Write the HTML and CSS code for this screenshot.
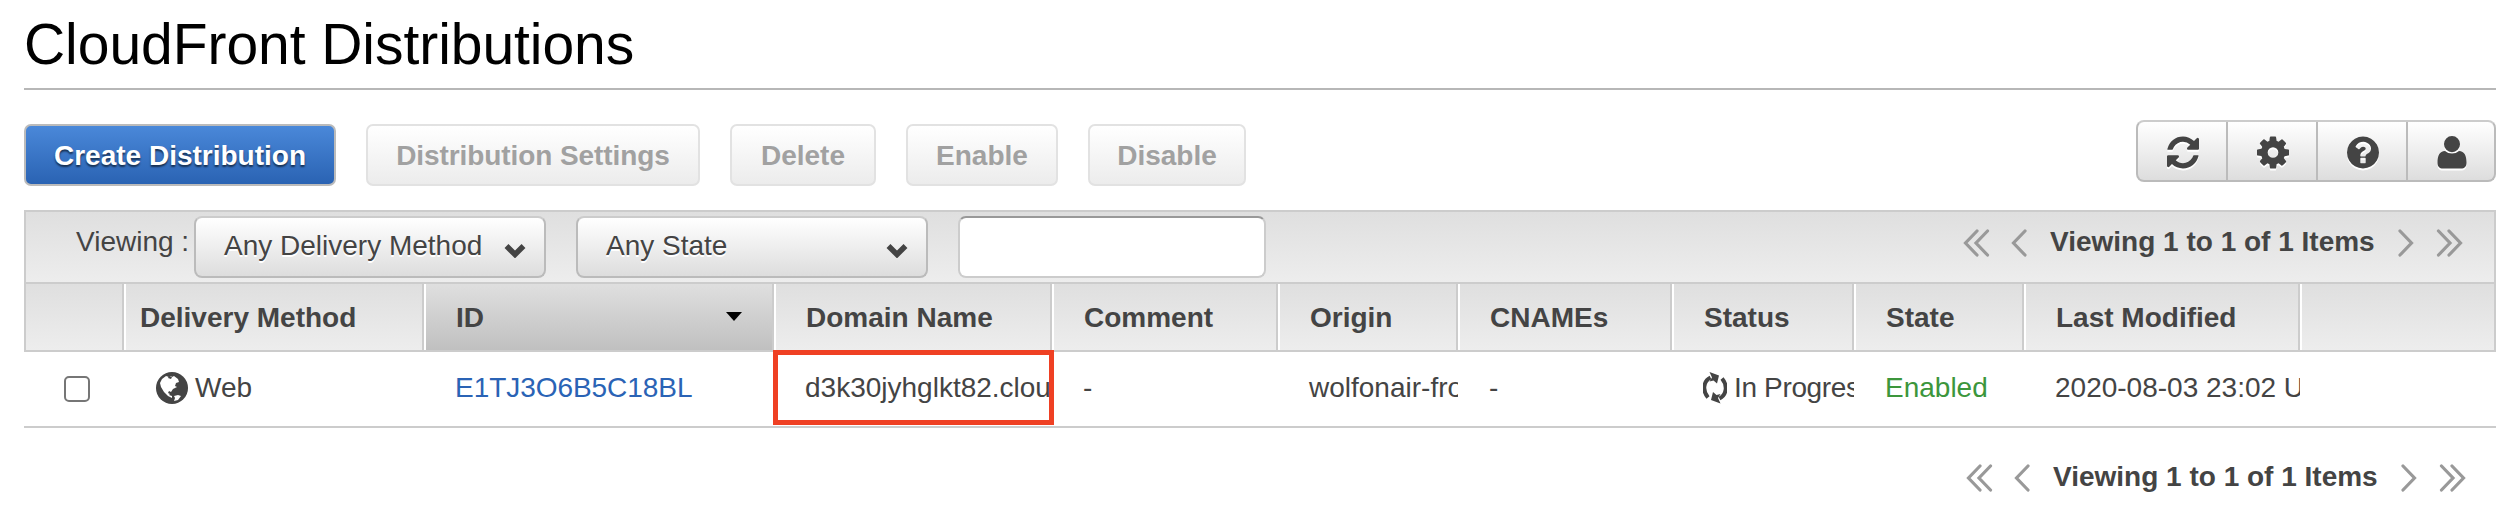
FILE: index.html
```html
<!DOCTYPE html>
<html lang="en">
<head>
<meta charset="utf-8">
<title>CloudFront Distributions</title>
<link rel="stylesheet" href="styles.css">
</head>
<body>
<svg class="defs" width="0" height="0">
  <symbol id="refresh" viewBox="0 0 1536 1536"><path d="M1511 928q0 5-1 7-64 268-268 434.500T764 1536q-146 0-282.500-55T238 1324l-129 129q-19 19-45 19t-45-19-19-45V960q0-26 19-45t45-19h448q26 0 45 19t19 45-19 45l-137 137q71 66 161 102t187 36q134 0 250-65t186-179q11-17 53-117 8-23 30-23h192q13 0 22.500 9.500t9.500 22.500zm25-800v448q0 26-19 45t-45 19h-448q-26 0-45-19t-19-45 19-45l138-138Q969 256 768 256q-134 0-250 65T332 500q-11 17-53 117-8 23-30 23H50q-13 0-22.500-9.500T18 608v-7q65-268 270-434.500T768 0q146 0 284 55.500T1297 212l130-129q19-19 45-19t45 19 19 45z"/></symbol>
  <symbol id="gear" viewBox="0 0 1536 1536"><path d="M1024 768q0-106-75-181t-181-75-181 75-75 181 75 181 181 75 181-75 75-181zm512-109v222q0 12-8 23t-20 13l-185 28q-19 54-39 91 35 50 107 138 10 12 10 25t-9 23q-27 37-99 108t-94 71q-12 0-26-9l-138-108q-44 23-91 38-16 136-29 186-7 28-36 28H657q-14 0-24.500-8.500T621 1506l-28-184q-49-16-90-37l-141 107q-10 9-25 9-14 0-25-11-126-114-165-168-7-10-7-23 0-12 8-23 15-21 51-66.500t54-70.500q-27-50-41-99L29 913q-13-2-21-12.500T0 877V655q0-12 8-23t19-13l186-28q14-46 39-92-40-57-107-138-10-12-10-24 0-10 9-23 26-36 98.500-107.500T337 135q13 0 26 10l138 107q44-23 91-38 16-136 29-186 7-28 36-28h222q14 0 24.500 8.500T915 30l28 184q49 16 90 37l142-107q9-9 24-9 13 0 25 10 129 119 165 170 7 8 7 22 0 12-8 23-15 21-51 66.500t-54 70.500q26 50 41 98l183 28q13 2 21 12.500t8 23.500z"/></symbol>
  <symbol id="question" viewBox="0 0 1536 1536"><path d="M896 1248v-192q0-14-9-23t-23-9H672q-14 0-23 9t-9 23v192q0 14 9 23t23 9h192q14 0 23-9t9-23zm256-672q0-88-55.500-163T958 297t-170-41q-243 0-371 213-15 24 8 42l132 100q7 6 19 6 16 0 25-12 53-68 86-92 34-24 86-24 48 0 85.500 26t37.500 59q0 38-20 61t-68 45q-63 28-115.500 86.500T640 892v36q0 14 9 23t23 9h192q14 0 23-9t9-23q0-19 21.500-49.500T972 829q32-18 49-28.500t46-35 44.500-48 28-60.500 12.500-81zm384 192q0 209-103 385.500T1153.500 1433 768 1536t-385.500-103T103 1153.500 0 768t103-385.500T382.500 103 768 0t385.500 103T1433 382.500 1536 768z"/></symbol>
  <symbol id="user" viewBox="0 0 30 33"><path d="M15 0a8 8 0 0 1 8 8.200a8 8 0 0 1-16 0A8 8 0 0 1 15 0ZM8 15c2 1.700 4.300 2.500 7 2.500s5-.800 7-2.500c5.500 0 7.500 5 7.500 11.500 0 4-2 6-5.500 6H6c-3.500 0-5.500-2-5.500-6C.5 20 2.500 15 8 15Z"/></symbol>
  <symbol id="globe" viewBox="0 0 32 32"><circle cx="16" cy="16" r="16"/><path fill="#fff" d="m6 7 4-3 3 1 2-1 1 1 2-1 4 3 1 3-3 1-1 3 2 1-4 2-2 3-2-1-1 2 2 1-1 1 3 1v2l-4-2-4-4-3-5-1-4Zm12 17 4-1 3 1-3 4-4 1 1-3Z"/><path d="m13 4 3 1-1 2-3-1Z"/></symbol>
  <symbol id="cycle" viewBox="0 0 24 32"><path d="M5 25.500C-1 18.500.5 9 7.500 5.500" fill="none" stroke="#444" stroke-width="4"/><path d="m6.500 0 9.500 3.500-2 8-3.500-3-4 1 2.500-4Z"/><path d="M19 6.500c6 7 4.500 16.500-2.500 20" fill="none" stroke="#444" stroke-width="4"/><path d="m17.500 31.500-9.500-3.500 2-8 3.500 3 4-1-2.500 4Z"/></symbol>
  <symbol id="chev" viewBox="0 0 22 15"><path d="m2.500 3 8.500 8.500L19.500 3" fill="none" stroke="#444" stroke-width="5.500"/></symbol>
  <symbol id="angle" viewBox="0 0 16 28"><path d="M14 2 2.500 14 14 26" fill="none" stroke="#999" stroke-width="3.200" stroke-linecap="round"/></symbol>
  <symbol id="angles" viewBox="0 0 27 28"><path d="M14 2 2.500 14 14 26M24.500 2 13 14l11.500 12" fill="none" stroke="#999" stroke-width="3.200" stroke-linecap="round"/></symbol>
</svg>
<main class="page">
  <h1 class="title">CloudFront Distributions</h1>
  <div class="toolbar">
    <div class="actions">
      <button class="btn primary">Create Distribution</button>
      <button class="btn wide" disabled>Distribution Settings</button>
      <button class="btn del" disabled>Delete</button>
      <button class="btn ena" disabled>Enable</button>
      <button class="btn dis" disabled>Disable</button>
    </div>
    <div class="tools">
      <span class="tool"><svg><use href="#refresh"/></svg></span>
      <span class="tool"><svg><use href="#gear"/></svg></span>
      <span class="tool"><svg><use href="#question"/></svg></span>
      <span class="tool"><svg class="user"><use href="#user"/></svg></span>
    </div>
  </div>
  <section class="table">
    <div class="filters">
      <span class="label">Viewing :</span>
      <div class="select"><span>Any Delivery Method</span><svg><use href="#chev"/></svg></div>
      <div class="select second"><span>Any State</span><svg><use href="#chev"/></svg></div>
      <input class="search" type="text">
      <div class="pager">
        <svg class="dbl"><use href="#angles"/></svg><svg class="sgl"><use href="#angle"/></svg><b>Viewing 1 to 1 of 1 Items</b><svg class="sgl flip"><use href="#angle"/></svg><svg class="dbl flip"><use href="#angles"/></svg>
      </div>
    </div>
    <div class="grid head">
      <div></div><div class="method">Delivery Method</div><div class="sorted">ID<i class="sort"></i></div><div>Domain Name</div><div>Comment</div><div>Origin</div><div>CNAMEs</div><div>Status</div><div>State</div><div>Last Modified</div><div></div>
    </div>
    <div class="grid row">
      <div class="check"><span class="box"></span></div>
      <div class="web"><svg><use href="#globe"/></svg>Web</div>
      <div class="link">E1TJ3O6B5C18BL</div>
      <div class="domain">d3k30jyhglkt82.cloudfront.net</div>
      <div>-</div><div>wolfonair-front</div><div>-</div>
      <div class="status"><svg><use href="#cycle"/></svg>In Progress</div>
      <div class="enabled">Enabled</div><div>2020-08-03 23:02 UTC</div><div></div>
      <span class="highlight"></span>
    </div>
  </section>
  <div class="pager bottom">
    <svg class="dbl"><use href="#angles"/></svg><svg class="sgl"><use href="#angle"/></svg><b>Viewing 1 to 1 of 1 Items</b><svg class="sgl flip"><use href="#angle"/></svg><svg class="dbl flip"><use href="#angles"/></svg>
  </div>
</main>
</body>
</html>
```
FILE: styles.css
```css
* { box-sizing: border-box; }
body { margin: 0; background: #fff; color: #444; font: 28px/32px "Liberation Sans", Arial, sans-serif; overflow: hidden; }
svg { fill: #444; flex: none; display: block; }
.defs { position: absolute; }
.page { width: 2510px; height: 508px; padding: 0 14px 0 24px; }
.title { margin: 0; height: 90px; padding-top: 12px; border-bottom: 2px solid #b7b7b7; color: #000; font-size: 57px; line-height: 64px; font-weight: 400; letter-spacing: -.05px; white-space: nowrap; }
.toolbar { display: flex; justify-content: space-between; height: 120px; padding-top: 30px; }
.actions { display: flex; gap: 30px; padding-top: 4px; }
.btn { height: 62px; padding: 1px 0 0; border: 2px solid #e2e2e2; border-radius: 7px; background: linear-gradient(#fff, #ececec); color: #a1a1a1; font: bold 28px/32px "Liberation Sans", Arial, sans-serif; white-space: nowrap; }
.primary { width: 312px; border-color: #bbb; background: linear-gradient(#4a88d9, #2a63b3); color: #fff; text-shadow: 0 2px 2px rgba(0,0,0,.6); }
.wide { width: 334px; letter-spacing: -.08px; }
.del { width: 146px; }
.ena { width: 152px; }
.dis { width: 158px; }
.tools { display: flex; width: 360px; height: 62px; border: 2px solid #bbb; border-top-color: #ccc; border-radius: 8px; background: linear-gradient(#fff, #ddd); }
.tool { flex: 0 0 90px; display: flex; padding: 14px 0 0 29px; border-right: 2px solid #bbb; }
.tool:last-child { border: 0; }
.tool svg { width: 32px; height: 33px; filter: drop-shadow(0 2px 0 #fff); }
.tool .user { width: 30px; }
.table { border-top: 2px solid #ccc; }
.filters { display: flex; height: 70px; padding: 4px 31px 0 50px; border: solid #ccc; border-width: 0 2px; background: linear-gradient(#dfdfdf, #ededed); }
.label { width: 118px; padding-top: 10px; white-space: nowrap; }
.select { display: flex; justify-content: space-between; width: 352px; height: 62px; padding: 12px 18px 0 28px; border: 2px solid #bbb; border-top-color: #ccc; border-radius: 8px; background: linear-gradient(#fff, #ddd); text-shadow: 0 2px 0 #fff; white-space: nowrap; }
.select svg { width: 22px; height: 15px; margin-top: 13px; }
.second { margin-left: 30px; }
.search { width: 308px; height: 62px; margin-left: 30px; border: 2px solid #ccc; border-top-color: #999; border-radius: 8px; background: #fff; }
.pager { display: flex; margin-left: auto; padding-top: 10px; white-space: nowrap; }
.pager svg { margin-top: 3px; }
.pager b { width: 326px; margin: 0 22px 0 23px; }
.dbl { width: 27px; height: 28px; }
.sgl { width: 16px; height: 28px; }
.dbl + .sgl { margin-left: 21px; }
.sgl + .dbl { margin-left: 22px; }
.flip { transform: scaleX(-1); }
.grid { display: grid; grid-template-columns: 100px 300px 350px 278px 226px 180px 214px 182px 170px 276px 196px; }
.grid > div { overflow: hidden; white-space: nowrap; }
.head { height: 70px; border: 2px solid #ccc; font-weight: bold; }
.head > div { height: 66px; padding: 18px 0 0 30px; border-left: 2px solid #fff; border-right: 2px solid #ccc; background: linear-gradient(#dfdfdf, #ededed); }
.head { grid-template-columns: 98px 300px 350px 278px 226px 180px 214px 182px 170px 276px 194px; }
.head > div:first-child { border-left: 0; }
.head > div:last-child { border-right: 0; }
.head > .method { padding-left: 14px; }
.head > .sorted { display: flex; justify-content: space-between; padding-right: 30px; background: linear-gradient(#dfdfdf, #c0c0c0); }
.sort { margin-top: 10px; width: 0; height: 0; border: solid transparent; border-width: 9px 8px 0; border-top-color: #000; }
.row { position: relative; height: 76px; border-bottom: 2px solid #ccc; }
.row > div { padding: 20px 0 0 31px; }
.row > .check { padding: 24px 0 0 40px; }
.box { display: block; width: 26px; height: 26px; border: 2px solid #767676; border-radius: 5px; }
.row > .web { display: flex; gap: 7px; padding-left: 32px; }
.web svg { width: 32px; height: 32px; }
.row > .link { color: #2a63b5; letter-spacing: -.05px; }
.row > .status { display: flex; gap: 7px; letter-spacing: -.35px; }
.status svg { width: 24px; height: 32px; }
.enabled { color: #3c963c; }
.highlight { position: absolute; left: 749px; top: -2px; width: 281px; height: 75px; border: 5px solid #ef4023; }
.pager.bottom { padding: 33px 30px 0 0; justify-content: flex-end; }
```
